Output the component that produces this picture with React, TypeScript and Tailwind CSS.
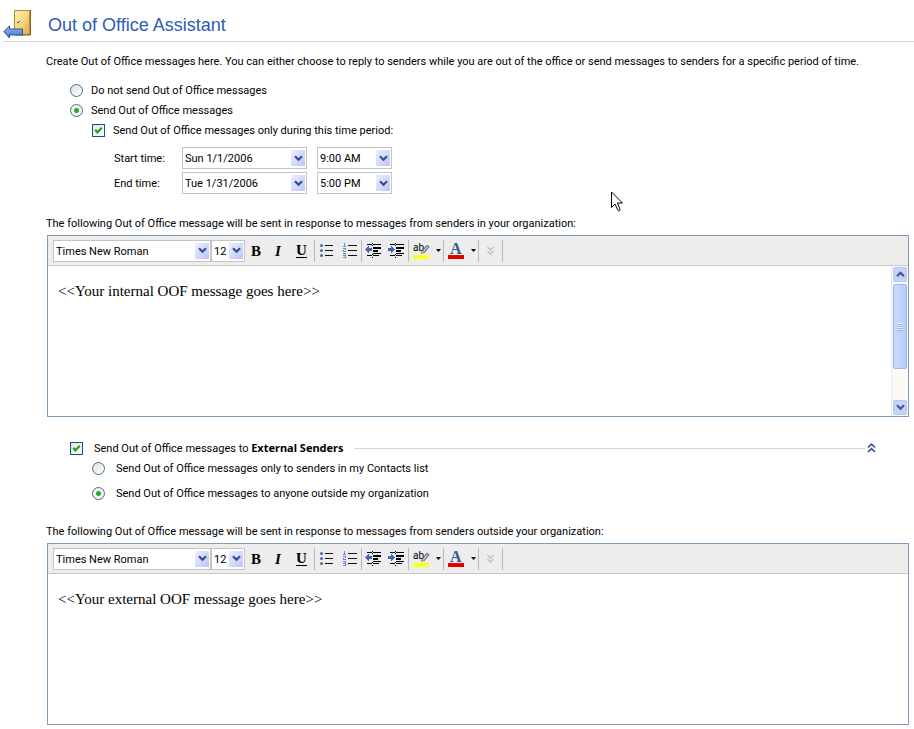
import { useState, type ReactNode } from "react";

const days = ["Sun 1/1/2006", "Tue 1/31/2006"];
const hours = ["9:00 AM", "5:00 PM"];

function DoorIcon() {
  return (
    <svg width="29" height="30" viewBox="0 0 29 30" aria-hidden="true">
      <defs>
        <linearGradient id="door" x1="0" y1="0" x2="1" y2="1">
          <stop offset="0" stopColor="#fff0b4" />
          <stop offset="0.5" stopColor="#f6d67c" />
          <stop offset="1" stopColor="#dda63c" />
        </linearGradient>
        <linearGradient id="arrow" x1="0" y1="0" x2="0" y2="1">
          <stop offset="0" stopColor="#9dbdf6" />
          <stop offset="1" stopColor="#3c6bcf" />
        </linearGradient>
      </defs>
      <path d="M11.5 1.5h16v24h-16z" fill="url(#door)" stroke="#a9864a" />
      <path d="M27.5 1v25H12" fill="none" stroke="#85632c" />
      <path d="M26.5 2v23" stroke="#c28d35" />
      <path d="M14 13.5h2M16 12.5h1" stroke="#6d5424" />
      <path d="M.8 22.5 6.5 17v3h13v6h-13v3z" fill="url(#arrow)" stroke="#34548f" strokeLinejoin="round" />
    </svg>
  );
}

interface DropdownProps {
  label: string;
  options: string[];
  initial: string;
  className: string;
}

function Dropdown({ label, options, initial, className }: DropdownProps) {
  const [value, setValue] = useState(initial);
  return (
    <div className={`relative h-[22px] border border-[#c4c4c4] bg-white ${className}`}>
      <select
        aria-label={label}
        value={value}
        onChange={(e) => setValue(e.target.value)}
        className="block h-5 w-full appearance-none bg-transparent pt-px pl-0.5 pr-4 outline-none"
      >
        {options.map((o) => (
          <option key={o}>{o}</option>
        ))}
      </select>
      <span className="pointer-events-none absolute inset-y-0.5 right-px flex w-3.5 items-center justify-center bg-linear-to-br from-[#eceffd] to-[#bcc4f8]">
        <svg width="9" height="7" viewBox="0 0 9 7" aria-hidden="true">
          <path d="M1 1.2 4.5 4.7 8 1.2" fill="none" stroke="#2f4f8c" strokeWidth="2.2" />
        </svg>
      </span>
    </div>
  );
}

interface RadioProps {
  name: string;
  checked: boolean;
  onChange: () => void;
  className: string;
  children: ReactNode;
}

function Radio({ name, checked, onChange, className, children }: RadioProps) {
  return (
    <label className={`flex h-5 items-center ${className}`}>
      <input
        type="radio"
        name={name}
        checked={checked}
        onChange={onChange}
        className="size-[13px] shrink-0 appearance-none rounded-full border border-[#4a6c8c] bg-linear-to-br from-[#dcdfe0] to-white checked:bg-[radial-gradient(circle,#2fa52f_0,#2fa52f_2px,#f1f5ef_3px)]"
      />
      <span className="pt-px">{children}</span>
    </label>
  );
}

interface CheckProps {
  checked: boolean;
  onChange: (v: boolean) => void;
  className: string;
  children: ReactNode;
}

function Check({ checked, onChange, className, children }: CheckProps) {
  return (
    <label className={`flex h-5 items-center ${className}`}>
      <span className="relative size-[13px] shrink-0">
        <input
          type="checkbox"
          checked={checked}
          onChange={(e) => onChange(e.target.checked)}
          className="block size-[13px] appearance-none border border-[#1c5180] bg-linear-to-br from-[#e4e6e3] to-white"
        />
        {checked && (
          <svg width="13" height="13" viewBox="0 0 13 13" className="pointer-events-none absolute inset-0" aria-hidden="true">
            <path d="M3.2 5.8 5.4 8.3 9.8 3.8" fill="none" stroke="#21a121" strokeWidth="2.2" />
          </svg>
        )}
      </span>
      <span className="pt-px">{children}</span>
    </label>
  );
}

function Tool({ label, className, children }: { label: string; className: string; children: ReactNode }) {
  return (
    <button type="button" aria-label={label} className={`flex h-6 shrink-0 items-center justify-center ${className}`}>
      {children}
    </button>
  );
}

function Separator() {
  return <span className="h-[22px] w-px shrink-0 bg-[#b9b9b9]" />;
}

function Caret() {
  return (
    <svg width="5" height="3" viewBox="0 0 5 3" aria-hidden="true">
      <path d="M0 0h5L2.5 3z" fill="#000" />
    </svg>
  );
}

function BulletIcon() {
  return (
    <svg width="15" height="15" viewBox="0 0 15 15" aria-hidden="true">
      <circle cx="2.5" cy="2.5" r="1.5" fill="#4a68ab" />
      <circle cx="2.5" cy="7.5" r="1.5" fill="#4a68ab" />
      <circle cx="2.5" cy="12.5" r="1.5" fill="#4a68ab" />
      <path d="M6 2h8v1H6zM6 7h8v1H6zM6 12h8v1H6z" fill="#111" />
    </svg>
  );
}

function NumberIcon() {
  return (
    <svg width="15" height="15" viewBox="0 0 15 15" shapeRendering="crispEdges" aria-hidden="true">
      <path
        d="M1 1h1v-1h1v3h1v1H1V3h1V1zM1 5h3v2H2v1h2v1H1V7h2V6H1zM1 10h3v5H1v-1h2v-1H1v-1h2v-1H1z"
        fill="#6a87c0"
      />
      <path d="M6 2h9v1H6zM6 7h9v1H6zM6 12h9v1H6z" fill="#111" />
    </svg>
  );
}

function IndentIcon({ out }: { out?: boolean }) {
  return (
    <svg width="17" height="15" viewBox="0 0 17 15" shapeRendering="crispEdges" aria-hidden="true">
      <path d="M2 1h5v1H2zM8 1h8v1H8zM8 4h8v2H8zM8 7h5v2H8zM8 10h8v1H8zM2 12h5v1H2zM8 12h6v1H8z" fill="#000" />
      <path d="M7 0h1v1H7zM7 2h1v1H7zM7 11h1v1H7zM7 14h1v1H7z" fill="#000" />
      <path d={out ? "M0 6.500 4 3v2h3v3H4v2z" : "M7 6.500 3 3v2H0v3h3v2z"} fill="#4468b4" />
    </svg>
  );
}

function HighlightIcon() {
  return (
    <svg width="18" height="18" viewBox="0 0 18 18" className="overflow-visible" aria-hidden="true">
      <text x="1" y="9" fontSize="10" fontFamily="Roboto, sans-serif" fill="#000">
        ab
      </text>
      <path d="M10 9.5 14.5 3.5 17 4.5 12.5 10.5 9.5 11z" fill="#b9c5d6" stroke="#4a5a74" />
      <path d="M8.5 12 10.500 9.500l1.500 1.500z" fill="#d8b84c" />
      <rect x="1" y="13" width="16" height="4" fill="#ffff1f" />
    </svg>
  );
}

function FontColorIcon() {
  return (
    <svg width="18" height="18" viewBox="0 0 18 18" className="overflow-visible" aria-hidden="true">
      <text x="3" y="12" fontSize="16" fontWeight="bold" fontFamily="Liberation Serif, serif" fill="#37578f">
        A
      </text>
      <rect x="1" y="13" width="16" height="4" fill="#e60000" />
    </svg>
  );
}

function Toolbar() {
  return (
    <div className="flex h-[30px] items-center border-b border-[#c9c9c9] bg-[#ededed] pl-[5px]">
      <Dropdown label="Font" options={["Times New Roman", "Arial"]} initial="Times New Roman" className="w-[158px]" />
      <Dropdown label="Font size" options={["10", "12", "14"]} initial="12" className="w-[34px]" />
      <Tool label="Bold" className="w-[22px]">
        <span className="font-['Liberation_Serif',serif] text-[15px] font-bold">B</span>
      </Tool>
      <Tool label="Italic" className="w-[22px]">
        <span className="font-['Liberation_Serif',serif] text-[15px] font-bold italic">I</span>
      </Tool>
      <Tool label="Underline" className="w-[25px]">
        <span className="border-b border-black font-['Liberation_Serif',serif] text-[15px] leading-[13px] font-bold">U</span>
      </Tool>
      <Separator />
      <Tool label="Bullets" className="w-[23px]">
        <BulletIcon />
      </Tool>
      <Tool label="Numbering" className="w-[23px]">
        <NumberIcon />
      </Tool>
      <Separator />
      <Tool label="Decrease indent" className="w-[23px]">
        <IndentIcon out />
      </Tool>
      <Tool label="Increase indent" className="w-[23px]">
        <IndentIcon />
      </Tool>
      <Separator />
      <Tool label="Highlight" className="w-6">
        <HighlightIcon />
      </Tool>
      <Tool label="Highlight colors" className="w-2.5">
        <Caret />
      </Tool>
      <Separator />
      <Tool label="Font color" className="w-6">
        <FontColorIcon />
      </Tool>
      <Tool label="Font colors" className="w-2.5">
        <Caret />
      </Tool>
      <Separator />
      <Tool label="More" className="w-[23px]">
        <svg width="7" height="9" viewBox="0 0 7 9" aria-hidden="true">
          <path d="M.5 1 3.5 4l3-3M.5 5l3 3 3-3" fill="none" stroke="#bdbdbd" strokeWidth="1.3" />
        </svg>
      </Tool>
      <Separator />
    </div>
  );
}

function ScrollArrow({ down }: { down?: boolean }) {
  return (
    <button
      type="button"
      aria-label={down ? "Scroll down" : "Scroll up"}
      className="flex h-[15px] w-3.5 items-center justify-center rounded-xs border border-[#b4c8f6] bg-[#c3d3fd]"
    >
      <svg width="9" height="7" viewBox="0 0 9 7" aria-hidden="true">
        <path d={down ? "M1 1.2 4.5 4.7 8 1.2" : "M1 5.3 4.5 1.8 8 5.3"} fill="none" stroke="#40588c" strokeWidth="2.2" />
      </svg>
    </button>
  );
}

function ScrollBar() {
  return (
    <div className="flex w-[17px] flex-col items-center border-l border-[#ecebe4] bg-[#fbfaf5] py-px">
      <ScrollArrow />
      <div className="mt-0.5 flex h-[85px] w-3.5 flex-col items-center justify-center rounded-xs border border-[#9db6ee] bg-linear-to-r from-[#cbdafe] to-[#b7cbfb]">
        {[0, 1, 2, 3].map((i) => (
          <span key={i} className="h-0.5 w-1.5 border-t border-[#eef4fe] bg-[#8cb0f8]" />
        ))}
      </div>
      <div className="flex-1" />
      <ScrollArrow down />
    </div>
  );
}

function Editor({ label, text, scroll }: { label: string; text: string; scroll?: boolean }) {
  return (
    <div className="mt-px mr-[5px] ml-px border border-[#7c9cba]">
      <Toolbar />
      <div className="flex h-[150px]">
        <textarea
          aria-label={label}
          defaultValue={text}
          className="block min-w-0 flex-1 resize-none overflow-hidden bg-white px-2.5 py-[15px] font-['Liberation_Serif',serif] text-[15px] leading-5 outline-none"
        />
        {scroll && <ScrollBar />}
      </div>
    </div>
  );
}

export default function App() {
  const [send, setSend] = useState(true);
  const [period, setPeriod] = useState(true);
  const [external, setExternal] = useState(true);
  const [anyone, setAnyone] = useState(true);

  return (
    <div className="relative w-full bg-white pb-1 font-[Roboto,sans-serif] text-[11px] leading-5 text-black">
      <header className="ml-[3px] flex h-[42px] items-center gap-4 border-b border-[#d6d6d6] pt-[7px]">
        <DoorIcon />
        <h1 className="pt-px font-['Liberation_Sans',sans-serif] text-lg text-[#2f5cb0]">Out of Office Assistant</h1>
      </header>

      <main className="pt-2.5 pl-[46px]">
        <p>
          Create Out of Office messages here. You can either choose to reply to senders while you are out of the office or
          send messages to senders for a specific period of time.
        </p>

        <div className="mt-2 pl-6">
          <Radio name="send" checked={!send} onChange={() => setSend(false)} className="gap-2">
            Do not send Out of Office messages
          </Radio>
          <Radio name="send" checked={send} onChange={() => setSend(true)} className="gap-2">
            Send Out of Office messages
          </Radio>
          <Check checked={period} onChange={setPeriod} className="gap-2 pl-[22px]">
            Send Out of Office messages only during this time period:
          </Check>
          <div className="mt-[7px] flex flex-col gap-[3px] pl-11">
            {["Start time", "End time"].map((name, i) => (
              <div key={name} className="flex items-center">
                <span className="w-[68px] pt-px">{name}:</span>
                <Dropdown label={`${name} date`} options={days} initial={days[i]} className="w-[125px]" />
                <Dropdown label={`${name} hour`} options={hours} initial={hours[i]} className="ml-2.5 w-[75px]" />
              </div>
            ))}
          </div>
        </div>

        <p className="mt-5">
          The following Out of Office message will be sent in response to messages from senders in your organization:
        </p>
        <Editor label="Internal message" text="<<Your internal OOF message goes here>>" scroll />

        <div className="mt-[21px] pl-6">
          <div className="flex items-center pr-[38px]">
            <Check checked={external} onChange={setExternal} className="gap-[11px]">
              Send Out of Office messages to <b className="font-['Noto_Sans',sans-serif]">External Senders</b>
            </Check>
            <span className="ml-2.5 h-px flex-1 bg-[#d4d4d4]" />
            <button type="button" aria-label="Collapse" className="ml-0.5">
              <svg width="9" height="10" viewBox="0 0 9 10" aria-hidden="true">
                <path d="M1 4.5 4.5 1.2 8 4.5M1 9 4.5 5.7 8 9" fill="none" stroke="#34508c" strokeWidth="1.6" />
              </svg>
            </button>
          </div>
          <Radio name="external" checked={!anyone} onChange={() => setAnyone(false)} className="gap-[11px] pl-[22px]">
            Send Out of Office messages only to senders in my Contacts list
          </Radio>
          <Radio name="external" checked={anyone} onChange={() => setAnyone(true)} className="mt-[5px] gap-[11px] pl-[22px]">
            Send Out of Office messages to anyone outside my organization
          </Radio>
        </div>

        <p className="mt-[19px]">
          The following Out of Office message will be sent in response to messages from senders outside your organization:
        </p>
        <Editor label="External message" text="<<Your external OOF message goes here>>" />
      </main>

      {/* mouse pointer */}
      <svg width="13" height="22" viewBox="0 0 13 22" className="pointer-events-none absolute top-[191px] left-[611px]" aria-hidden="true">
        <path d="M.5 1v15.5l3.5-3.5 3 6.5c.8 1 2.3.3 2-1L6.5 12h5z" fill="#fff" stroke="#000" />
      </svg>
    </div>
  );
}
